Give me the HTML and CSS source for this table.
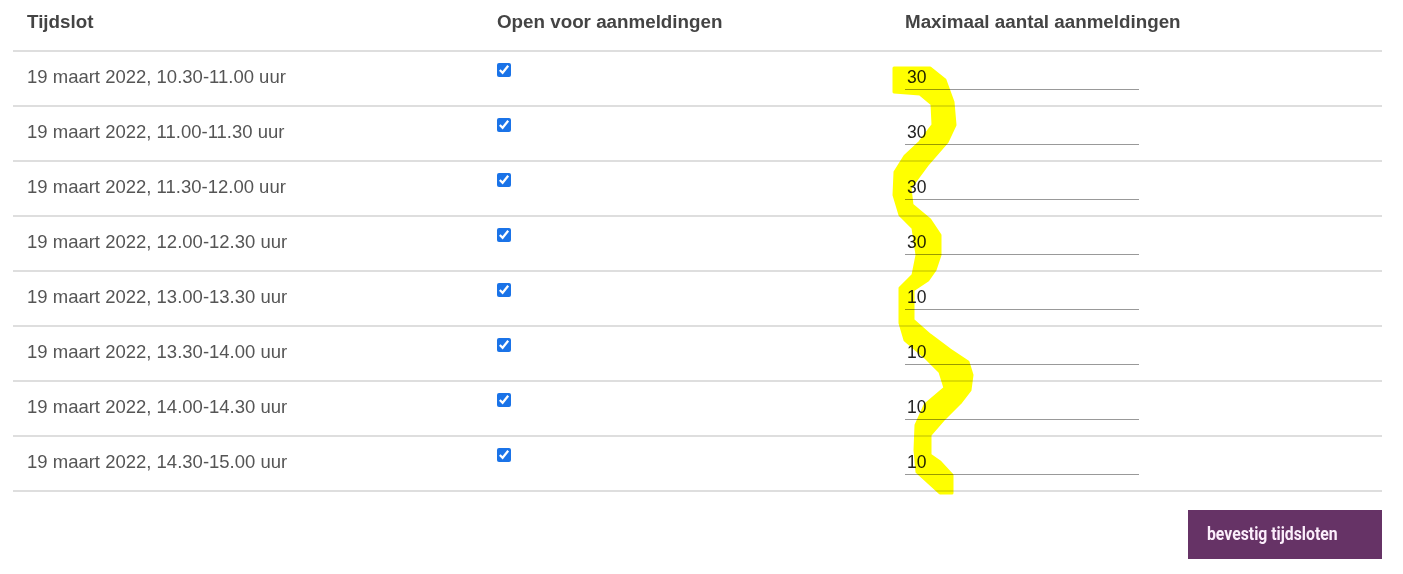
FILE: index.html
```html
<!DOCTYPE html>
<html lang="nl">
<head>
<meta charset="utf-8">
<title>Tijdsloten</title>
<link rel="stylesheet" href="styles.css">
</head>
<body>
<div class="page">
  <table class="slots">
    <colgroup>
      <col class="c1"><col class="c2"><col class="c3">
    </colgroup>
    <thead>
      <tr><th>Tijdslot</th><th>Open voor aanmeldingen</th><th>Maximaal aantal aanmeldingen</th></tr>
    </thead>
    <tbody>
      <tr><td>19 maart 2022, 10.30-11.00 uur</td><td><input type="checkbox" class="chk" checked></td><td><input class="num" type="text" value="30"></td></tr>
      <tr><td>19 maart 2022, 11.00-11.30 uur</td><td><input type="checkbox" class="chk" checked></td><td><input class="num" type="text" value="30"></td></tr>
      <tr><td>19 maart 2022, 11.30-12.00 uur</td><td><input type="checkbox" class="chk" checked></td><td><input class="num" type="text" value="30"></td></tr>
      <tr><td>19 maart 2022, 12.00-12.30 uur</td><td><input type="checkbox" class="chk" checked></td><td><input class="num" type="text" value="30"></td></tr>
      <tr><td>19 maart 2022, 13.00-13.30 uur</td><td><input type="checkbox" class="chk" checked></td><td><input class="num" type="text" value="10"></td></tr>
      <tr><td>19 maart 2022, 13.30-14.00 uur</td><td><input type="checkbox" class="chk" checked></td><td><input class="num" type="text" value="10"></td></tr>
      <tr><td>19 maart 2022, 14.00-14.30 uur</td><td><input type="checkbox" class="chk" checked></td><td><input class="num" type="text" value="10"></td></tr>
      <tr><td>19 maart 2022, 14.30-15.00 uur</td><td><input type="checkbox" class="chk" checked></td><td><input class="num" type="text" value="10"></td></tr>
    </tbody>
  </table>
  <div class="actions">
    <button class="confirm" type="button"><span class="confirm-label">bevestig tijdsloten</span></button>
  </div>
</div>
<svg class="scribble" width="1403" height="574" viewBox="0 0 1403 574" aria-hidden="true">
  <polygon fill="#ffff00" stroke="#ffff00" stroke-width="3" stroke-linejoin="round"
    points="894,68 930,68 945,80 953,102 955,125 947,142 927,165 910,188 912,205 930,220 940,235 940,255 935,270 928,280 913,290 913,320 930,335 950,350 968,362 972,375 970,390 960,403 943,420 930,435 930,455 940,462 952,475 952,493 940,493 917,472 915,450 916,425 925,405 945,388 940,372 925,357 905,340 900,323 900,288 913,275 917,255 913,228 900,215 894,195 895,172 905,156 920,142 933,125 932,104 920,94 894,92"/>
</svg>
</body>
</html>
```
FILE: styles.css
```css
html, body {
  margin: 0;
  padding: 0;
  background: #fff;
}
body {
  font-family: "Liberation Sans", Arial, sans-serif;
  color: #555;
  position: relative;
}
.page {
  padding: 0 21px 0 13px;
}
.slots {
  width: 100%;
  border-collapse: collapse;
  table-layout: fixed;
}
.c1 { width: 470px; }
.c2 { width: 408px; }
.slots th {
  text-align: left;
  font-weight: bold;
  font-size: 18.8px;
  color: #444;
  height: 51px;
  box-sizing: border-box;
  padding: 0 14px 6px;
  vertical-align: middle;
  border-bottom: 2px solid #dedede;
}
.slots td {
  font-size: 18.5px;
  height: 55px;
  box-sizing: border-box;
  padding: 14px 14px 0;
  vertical-align: top;
  border-bottom: 2px solid #dedede;
  line-height: 21px;
}
.chk {
  display: block;
  margin: -3px 0 0 0;
  width: 14px;
  height: 14px;
  accent-color: #1a73e8;
}
.num {
  display: block;
  width: 234px;
  box-sizing: border-box;
  height: 25px;
  margin-top: -1px;
  padding: 0 2px;
  border: none;
  border-bottom: 1px solid #999;
  font-family: "Liberation Sans", Arial, sans-serif;
  font-size: 17.5px;
  color: #222;
  background: transparent;
  outline: none;
}
.actions {
  display: flex;
  justify-content: flex-end;
  padding-top: 18px;
}
.confirm {
  width: 194px;
  height: 49px;
  background: #663366;
  color: #fbeefb;
  border: none;
  padding: 0 0 2px 19px;
  text-align: left;
}
.confirm-label {
  display: inline-block;
  font-family: Roboto, "Liberation Sans", sans-serif;
  font-weight: 700;
  font-size: 19px;
  transform: scaleX(0.83);
  transform-origin: left center;
  white-space: nowrap;
}
.scribble {
  position: absolute;
  left: 0;
  top: 0;
  pointer-events: none;
  mix-blend-mode: multiply;
}
```
